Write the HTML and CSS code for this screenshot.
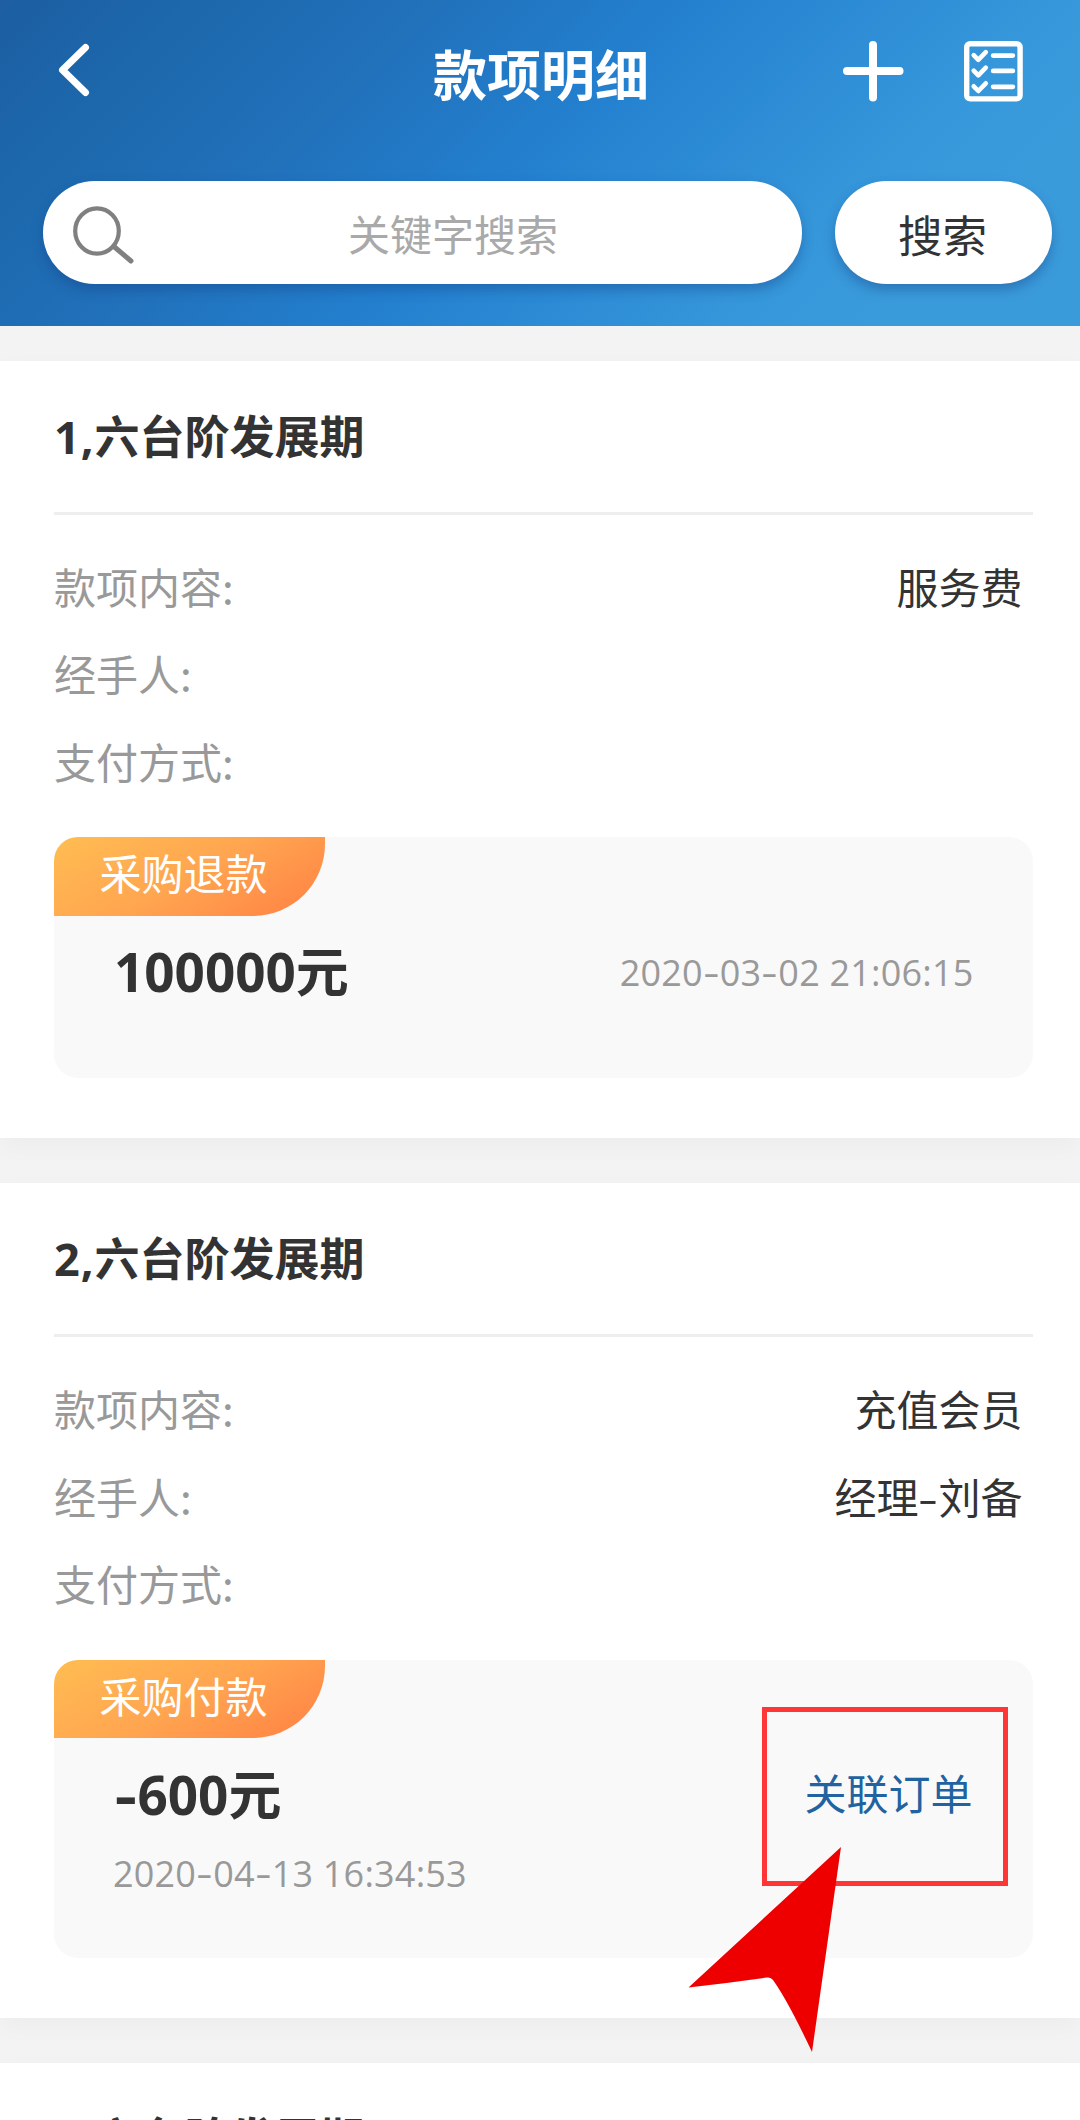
FILE: index.html
```html
<!DOCTYPE html>
<html lang="zh-CN">
<head>
<meta charset="utf-8">
<title>款项明细</title>
<link rel="stylesheet" href="styles.css">
</head>
<body>
<div class="page">
  <header class="header">
    <div class="navbar">
      <svg class="back" width="60" height="60" viewBox="0 0 60 60"><path d="M42.500 6.500 19.500 29 42.500 51.500" fill="none" stroke="#fff" stroke-width="7" stroke-linecap="round" stroke-linejoin="round"/></svg>
      <h1 class="title">款项明细</h1>
      <div class="actions">
        <svg width="61" height="61" viewBox="0 0 61 61"><path d="M30 4V56.500M4 30H56.500" fill="none" stroke="#fff" stroke-width="8" stroke-linecap="round"/></svg>
        <svg width="59" height="61" viewBox="0 0 59 61" fill="none" stroke="#fff" stroke-linecap="round" stroke-linejoin="round">
          <rect x="2.700" y="2.700" width="53.400" height="55.200" rx="3.500" stroke-width="5.400"/>
          <path d="M9.700 14.200 14.300 18.900 21.800 11.200M9.700 29.600 14.300 34.300 21.800 26.600M9.700 45.300 14.300 50 21.800 42.300" stroke-width="4.600"/>
          <path d="M29.200 14.600H48.800M29.200 29.900H48.800M29.200 45.800H48.800" stroke-width="4.800"/>
        </svg>
      </div>
    </div>
    <div class="search">
      <div class="field">
        <svg class="lens" width="64" height="62" viewBox="0 0 64 62" fill="none" stroke="#808080" stroke-linecap="round"><ellipse cx="26" cy="29" rx="21.800" ry="22.700" stroke-width="4.200"/><path d="M43.500 45 60 59" stroke-width="5"/></svg>
        <span class="placeholder">关键字搜索</span>
      </div>
      <button class="go">搜索</button>
    </div>
  </header>

  <main class="list">
    <section class="card">
      <h2 class="name"><span class="num">1,</span>六台阶发展期</h2>
      <div class="rows">
        <div class="row"><span>款项内容:</span><b>服务费</b></div>
        <div class="row"><span>经手人:</span></div>
        <div class="row"><span>支付方式:</span></div>
      </div>
      <div class="detail">
        <span class="tag">采购退款</span>
        <div class="line">
          <strong class="amount">100000元</strong>
          <time class="time">2020<i>-</i>03<i>-</i>02 21:06:15</time>
        </div>
      </div>
    </section>

    <section class="card">
      <h2 class="name"><span class="num">2,</span>六台阶发展期</h2>
      <div class="rows">
        <div class="row"><span>款项内容:</span><b>充值会员</b></div>
        <div class="row"><span>经手人:</span><b>经理<i class="dash">-</i>刘备</b></div>
        <div class="row"><span>支付方式:</span></div>
      </div>
      <div class="detail detail-tall">
        <span class="tag">采购付款</span>
        <div class="line">
          <strong class="amount"><i>-</i>600元</strong>
          <a class="link">关联订单</a>
        </div>
        <time class="time">2020<i>-</i>04<i>-</i>13 16:34:53</time>
        <div class="marker"></div>
        <svg class="pointer" width="154" height="206" viewBox="0 0 154 206"><path d="M153 0 0.500 140.500Q40 136 79 130.500Q83 130 85 133Q100 154 124 205Z" fill="#ee0000"/></svg>
      </div>
    </section>

    <section class="card">
      <h2 class="name"><span class="num">3,</span>六台阶发展期</h2>
    </section>
  </main>
</div>
</body>
</html>
```

FILE: styles.css
```css
* { box-sizing: border-box; }

body {
  margin: 0;
  background: #f3f3f3;
  color: #333;
  font-family: "Noto Sans CJK SC", sans-serif;
}

.page { width: 1080px; height: 2120px; overflow: hidden; }

i { font-style: normal; }

.header {
  height: 326px;
  padding: 0 28px 0 43px;
  background: linear-gradient(135deg, #1c5ea1 0, #1d69ae 17%, #2171bb 31%, #2380cf 49%, #3596da 74%, #3a9bdb 85%, #3a9bdb 100%);
}

.navbar {
  display: grid;
  grid-template-columns: 1fr auto 1fr;
  align-items: center;
  height: 142px;
  padding-right: 29px;
}

.title { margin: 3px 0 0 16px; font-size: 54px; line-height: 60px; font-weight: 700; color: #fff; }
.actions { display: flex; justify-content: flex-end; gap: 60px; }

.search { display: flex; gap: 33px; padding-top: 39px; }

.field, .go {
  height: 103px;
  border-radius: 52px;
  background: #fff;
  box-shadow: 0 6px 12px rgba(20, 60, 130, .38);
}

.field { display: flex; align-items: center; width: 759px; padding-left: 28px; }
.placeholder { flex: 1; padding-right: 31px; text-align: center; font-size: 42px; line-height: 60px; color: #a9a9a9; }
.go { width: 217px; padding: 2px 2px 0 0; border: 0; font: 400 44.500px/60px "Noto Sans CJK SC", sans-serif; color: #333; }

.list { display: flex; flex-direction: column; gap: 45px; padding-top: 35px; }

.card {
  padding: 0 47.500px 60px 54px;
  background: #fff;
  box-shadow: 0 8px 24px rgba(0, 0, 0, .03);
}

.name {
  height: 154px;
  margin: 0;
  padding-top: 42px;
  border-bottom: 3px solid #eee;
  font-size: 45px;
  line-height: 64px;
  font-weight: 700;
}
.num { display: inline-block; width: 40.500px; font-family: "Open Sans", sans-serif; line-height: 1; letter-spacing: 1px; }

.rows { padding: 27px 10px 33.500px 0; }
.row { display: flex; justify-content: space-between; height: 87.330px; font-size: 42px; line-height: 87px; color: #999; }
.row b { font-weight: 400; color: #333; }
.dash { display: inline-block; width: 20px; text-align: center; transform: scaleX(1.4); }

.detail {
  position: relative;
  height: 241px;
  border-radius: 24px;
  background: #f9f9f9;
}
.detail-tall { height: 298px; }

.tag {
  display: block;
  width: 271px;
  height: 78.500px;
  padding-left: 45.500px;
  border-radius: 24px 0 72px 0;
  background: linear-gradient(150deg, #ffbd52 0, #ffa550 50%, #ff8b47 85%);
  font-size: 42px;
  line-height: 70px;
  color: #fff;
}

.line { display: flex; justify-content: space-between; align-items: center; height: 113px; padding: 0 59px 0 60px; }
.amount { font: 700 53px/64px "Open Sans", "Noto Sans CJK SC", sans-serif; }
.amount i { display: inline-block; width: 23.500px; text-align: center; transform: scaleX(1.3); }
.time { padding-top: 2px; font: 400 36px/48px "Open Sans", "Noto Sans CJK SC", sans-serif; letter-spacing: .2px; color: #999; }
.time i { display: inline-block; width: 17px; text-align: center; transform: scaleX(1.4); }
.detail-tall .time { display: block; padding: 0 0 0 59px; margin-top: -1px; }
.link { margin-top: -5px; padding-right: 1px; font-size: 42px; line-height: 60px; color: #2063a0; }

.marker {
  position: absolute;
  left: 708px;
  top: 47px;
  width: 246px;
  height: 179px;
  border: 5px solid #ff3636;
}
.pointer { position: absolute; left: 634px; top: 187px; z-index: 2; }
```
